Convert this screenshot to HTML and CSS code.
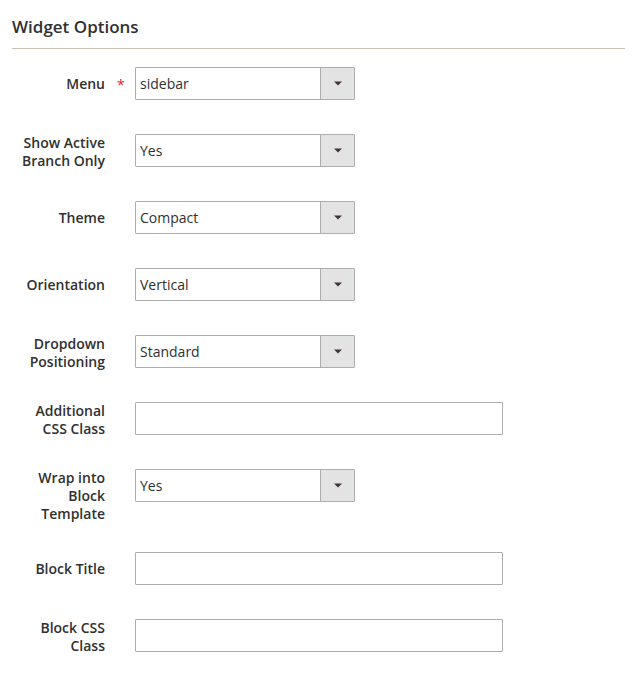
FILE: index.html
```html
<!DOCTYPE html>
<html>
<head>
<meta charset="utf-8">
<link rel="stylesheet" href="styles.css">
</head>
<body>
<div class="page">
  <div class="title">Widget Options</div>
  <div class="form">
    <div class="label"><span class="required">Menu</span></div>
    <div class="select"><span class="value">sidebar</span><span class="btn"><svg width="8" height="5" viewBox="0 0 8 5"><path d="M0 0.5h8L4 4.5z" fill="#41362f"/></svg></span></div>

    <div class="label"><span>Show Active Branch Only</span></div>
    <div class="select"><span class="value">Yes</span><span class="btn"><svg width="8" height="5" viewBox="0 0 8 5"><path d="M0 0.5h8L4 4.5z" fill="#41362f"/></svg></span></div>

    <div class="label"><span>Theme</span></div>
    <div class="select"><span class="value">Compact</span><span class="btn"><svg width="8" height="5" viewBox="0 0 8 5"><path d="M0 0.5h8L4 4.5z" fill="#41362f"/></svg></span></div>

    <div class="label"><span>Orientation</span></div>
    <div class="select"><span class="value">Vertical</span><span class="btn"><svg width="8" height="5" viewBox="0 0 8 5"><path d="M0 0.5h8L4 4.5z" fill="#41362f"/></svg></span></div>

    <div class="label"><span>Dropdown Positioning</span></div>
    <div class="select"><span class="value">Standard</span><span class="btn"><svg width="8" height="5" viewBox="0 0 8 5"><path d="M0 0.5h8L4 4.5z" fill="#41362f"/></svg></span></div>

    <div class="label"><span>Additional CSS Class</span></div>
    <input class="text" type="text">

    <div class="label tall"><span>Wrap into Block Template</span></div>
    <div class="select"><span class="value">Yes</span><span class="btn"><svg width="8" height="5" viewBox="0 0 8 5"><path d="M0 0.5h8L4 4.5z" fill="#41362f"/></svg></span></div>

    <div class="label"><span>Block Title</span></div>
    <input class="text" type="text">

    <div class="label"><span>Block CSS Class</span></div>
    <input class="text" type="text">
  </div>
</div>
</body>
</html>
```
FILE: styles.css
```css
html, body {
  margin: 0;
  padding: 0;
  background: #ffffff;
}
body {
  font-family: "Open Sans", "Liberation Sans", sans-serif;
  color: #303030;
}
.page {
  padding: 17px 12px 0 12px;
}
.title {
  font-size: 17px;
  font-weight: 600;
  line-height: 20px;
  color: #303030;
  padding-bottom: 11px;
  border-bottom: 1px solid #cac3b4;
}
.form {
  margin-top: 18px;
  display: grid;
  grid-template-columns: 93px 1fr;
  column-gap: 30px;
  row-gap: 34px;
  align-items: start;
}
.label {
  height: 33px;
  display: flex;
  align-items: safe center;
  justify-content: flex-end;
  text-align: right;
  font-size: 14px;
  font-weight: 600;
  line-height: 18px;
}
.label.tall {
  height: 49px;
  align-items: flex-start;
}
.required {
  position: relative;
}
.required::after {
  content: "*";
  position: absolute;
  left: calc(100% + 12px);
  top: 1px;
  color: #e22626;
  font-size: 14px;
  font-weight: 400;
}
.select {
  width: 220px;
  height: 33px;
  box-sizing: border-box;
  border: 1px solid #adadad;
  border-radius: 1px;
  display: flex;
  align-items: stretch;
  background: #fff;
}
.value {
  flex: 1;
  font-size: 14px;
  line-height: 31px;
  padding-left: 4px;
  color: #303030;
}
.btn {
  width: 33px;
  background: #e3e3e3;
  border-left: 1px solid #adadad;
  display: flex;
  align-items: center;
  justify-content: center;
}
.btn svg {
  display: block;
  margin-left: 1px;
}
.text {
  display: block;
  width: 368px;
  height: 33px;
  box-sizing: border-box;
  border: 1px solid #adadad;
  border-radius: 1px;
  margin: 0;
  padding: 0 4px;
  font-family: inherit;
  font-size: 14px;
  background: #fff;
  outline: none;
}
```
